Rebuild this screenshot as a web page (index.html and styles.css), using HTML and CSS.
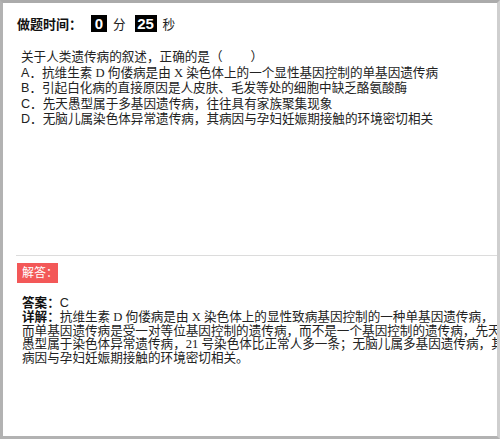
FILE: index.html
```html
<!DOCTYPE html>
<html lang="zh">
<head>
<meta charset="UTF-8" />
<title>做题</title>
<link rel="stylesheet" href="styles.css">
</head>
<body>
<div class="frame">
  <div class="timer">
    <span class="timer-label">做题时间：</span>
    <span class="digit">0</span>
    <span class="unit">分</span>
    <span class="digit digit-wide">25</span>
    <span class="unit">秒</span>
  </div>

  <div class="question">
    <p>关于人类遗传病的叙述，正确的是（&nbsp;&nbsp;&nbsp;&nbsp;&nbsp;&nbsp;&nbsp;&nbsp;）</p>
    <p>A．抗维生素<span class="en"> D </span>佝偻病是由<span class="en"> X </span>染色体上的一个显性基因控制的单基因遗传病</p>
    <p>B．引起白化病的直接原因是人皮肤、毛发等处的细胞中缺乏酪氨酸酶</p>
    <p>C．先天愚型属于多基因遗传病，往往具有家族聚集现象</p>
    <p>D．无脑儿属染色体异常遗传病，其病因与孕妇妊娠期接触的环境密切相关</p>
  </div>

  <div class="divider"></div>

  <div class="tag">解答：</div>

  <div class="answer">
    <p class="answer-key"><strong>答案：</strong>C</p>
    <p class="detail"><strong>详解：</strong>抗维生素<span class="en"> D </span>佝偻病是由<span class="en"> X </span>染色体上的显性致病基因控制的一种单基因遗传病，<br>而单基因遗传病是受一对等位基因控制的遗传病，而不是一个基因控制的遗传病，先天<br>愚型属于染色体异常遗传病，<span class="en">21 </span>号染色体比正常人多一条；无脑儿属多基因遗传病，其<br>病因与孕妇妊娠期接触的环境密切相关。</p>
  </div>
</div>
</body>
</html>
```

FILE: styles.css
```css
* {
  box-sizing: border-box;
}
body {
  margin: 0;
  background-color: #fff;
  font-family: "Liberation Sans", "Noto Sans CJK SC", sans-serif;
  font-size: 12.6px;
  color: #222;
}
p {
  margin: 0;
}
.frame {
  width: 500px;
  height: 439px;
  overflow: hidden;
  border-top: 3px solid #ababab;
  border-left: 3px solid #b2b2b2;
  border-right: 3px solid #cfcfcf;
  border-bottom: 3px solid #b2b2b2;
  padding: 12px 0 0 14px;
}
.timer {
  display: flex;
  align-items: center;
  height: 16px;
}
.timer-label {
  font-weight: bold;
  font-size: 13px;
  color: #111;
}
.digit {
  display: flex;
  align-items: center;
  justify-content: center;
  width: 16px;
  height: 17px;
  margin-left: 9px;
  background-color: #000;
  color: #fff;
  font-family: "Liberation Sans", sans-serif;
  font-weight: bold;
  font-size: 15px;
}
.digit-wide {
  width: 22px;
  margin-left: 9px;
}
.unit {
  margin-left: 6px;
}
.question {
  height: 205px;
  margin-top: 19px;
  padding-left: 4px;
  line-height: 15.6px;
  white-space: nowrap;
}
.en {
  font-family: "Liberation Serif", serif;
}
.divider {
  height: 1px;
  margin-left: -1px;
  background-color: #dcdcdc;
}
.tag {
  width: 41px;
  height: 20px;
  margin-top: 7px;
  padding-left: 5px;
  background-color: #f35858;
  color: #fff;
  font-size: 12px;
  line-height: 20px;
}
.answer {
  margin-top: 12px;
  padding-left: 5px;
  white-space: nowrap;
}
.answer-key {
  line-height: 16px;
}
.detail {
  line-height: 13.6px;
}
strong {
  color: #111;
}
```
